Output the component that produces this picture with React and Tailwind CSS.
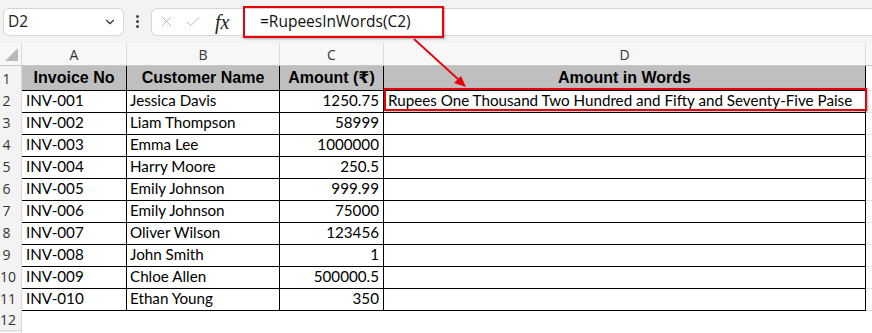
import { X, Check, ChevronDown } from 'lucide-react'

const rows = [
  ['INV-001', 'Jessica Davis', '1250.75', 'Rupees One Thousand Two Hundred and Fifty and Seventy-Five Paise'],
  ['INV-002', 'Liam Thompson', '58999', ''],
  ['INV-003', 'Emma Lee', '1000000', ''],
  ['INV-004', 'Harry Moore', '250.5', ''],
  ['INV-005', 'Emily Johnson', '999.99', ''],
  ['INV-006', 'Emily Johnson', '75000', ''],
  ['INV-007', 'Oliver Wilson', '123456', ''],
  ['INV-008', 'John Smith', '1', ''],
  ['INV-009', 'Chloe Allen', '500000.5', ''],
  ['INV-010', 'Ethan Young', '350', ''],
]

const grid = 'grid grid-cols-[22px_105px_153px_104px_482px_1fr]'
const uiFont = "font-['Open_Sans','Noto_Sans',sans-serif]"

function RowHead({ n }) {
  return (
    <div className={`bg-[#f3f3f3] border-r border-b border-[#d9d9d9] text-[14px] text-[#333] ${uiFont} flex items-center`}>
      <span className="w-[13px] text-center whitespace-nowrap">{n}</span>
    </div>
  )
}

export default function App() {
  return (
    <div className="w-[872px] h-[333px] bg-white relative overflow-hidden font-['Lato',sans-serif] text-black">
      {/* Formula bar */}
      <div className={`h-[43px] bg-[#f3f3f3] flex items-center ${uiFont}`}>
        <div className="ml-[3px] w-[121px] h-[28px] bg-white border border-[#d6d6d6] rounded-md flex items-center justify-between pl-[4px] pr-[6px]">
          <span className="text-[15.5px] text-[#222]">D2</span>
          <ChevronDown size={14} strokeWidth={2} className="text-[#333]" />
        </div>
        <div className="w-[27px] flex flex-col items-center gap-[2px]">
          <span className="w-[3px] h-[3px] bg-[#444] rounded-full" />
          <span className="w-[3px] h-[3px] bg-[#444] rounded-full" />
          <span className="w-[3px] h-[3px] bg-[#444] rounded-full" />
        </div>
        <div className="w-[92px] h-[28px] bg-white border border-r-0 border-[#d6d6d6] rounded-l-md flex items-center pl-[6px]">
          <X size={17} strokeWidth={1.3} className="text-[#b5b5b5]" />
          <Check size={18} strokeWidth={1.3} className="text-[#b5b5b5] ml-[9px]" />
          <span className="ml-[13px] text-[20px] italic text-[#222] font-['Liberation_Serif',serif]">fx</span>
        </div>
        <div className="flex-1 h-[28px] bg-white border-y border-[#d6d6d6] flex items-center pl-[17px] text-[15.5px] text-[#111]">
          =RupeesInWords(C2)
        </div>
      </div>

      {/* Column headers */}
      <div className={`${grid} h-[23px] bg-[#f7f7f7] border-b border-[#c8c8c8] text-[14px] text-[#333] ${uiFont}`}>
        <div className="border-r border-[#d9d9d9] relative">
          <div className="absolute left-[5px] bottom-[4px] w-0 h-0 border-l-[13px] border-l-transparent border-b-[13px] border-b-[#b8b8b8]" />
        </div>
        {['A', 'B', 'C', 'D'].map((c) => (
          <div key={c} className="border-r border-[#d9d9d9] flex items-center justify-center">{c}</div>
        ))}
        <div />
      </div>

      {/* Header row */}
      <div className={`${grid} h-[23px]`}>
        <RowHead n={1} />
        {['Invoice No', 'Customer Name', 'Amount (₹)', 'Amount in Words'].map((h) => (
          <div key={h} className="bg-[#bfbfbf] border-r border-b border-black flex items-center justify-center font-bold text-[16px] font-['Liberation_Sans','DejaVu_Sans',sans-serif]">
            {h}
          </div>
        ))}
        <div className="border-b border-[#e3e3e3]" />
      </div>

      {/* Data rows */}
      {rows.map((r, i) => (
        <div key={r[0]} className={`${grid} h-[22px] text-[15.2px]`}>
          <RowHead n={i + 2} />
          <div className="border-r border-b border-black flex items-center pl-[4px]">{r[0]}</div>
          <div className="border-r border-b border-black flex items-center pl-[3px]">{r[1]}</div>
          <div className="border-r border-b border-black flex items-center justify-end pr-[4px]">{r[2]}</div>
          <div className="border-r border-b border-black flex items-center pl-[4px] whitespace-nowrap">{r[3]}</div>
          <div className="border-b border-[#e3e3e3]" />
        </div>
      ))}

      {/* Row 12 */}
      <div className={`${grid} h-[22px]`}>
        <RowHead n={12} />
      </div>
      <div className={`${grid} h-[22px]`}>
        <RowHead n="" />
      </div>

      {/* Highlights */}
      <div className="absolute left-[243px] top-[6px] w-[201px] h-[32px] border-2 border-[#e8000b] shadow-[1px_1px_2px_rgba(0,0,0,0.3)]" />
      <div className="absolute left-[384px] top-[88px] w-[483px] h-[23px] border-2 border-[#e8000b] shadow-[1px_1px_2px_rgba(0,0,0,0.3)]" />
      <svg className="absolute left-0 top-0" width="872" height="333">
        <line x1="414" y1="39" x2="459" y2="80" stroke="#e8000b" strokeWidth="1.8" />
        <polygon points="466,87 454,83 461,76" fill="#e8000b" />
      </svg>
    </div>
  )
}
